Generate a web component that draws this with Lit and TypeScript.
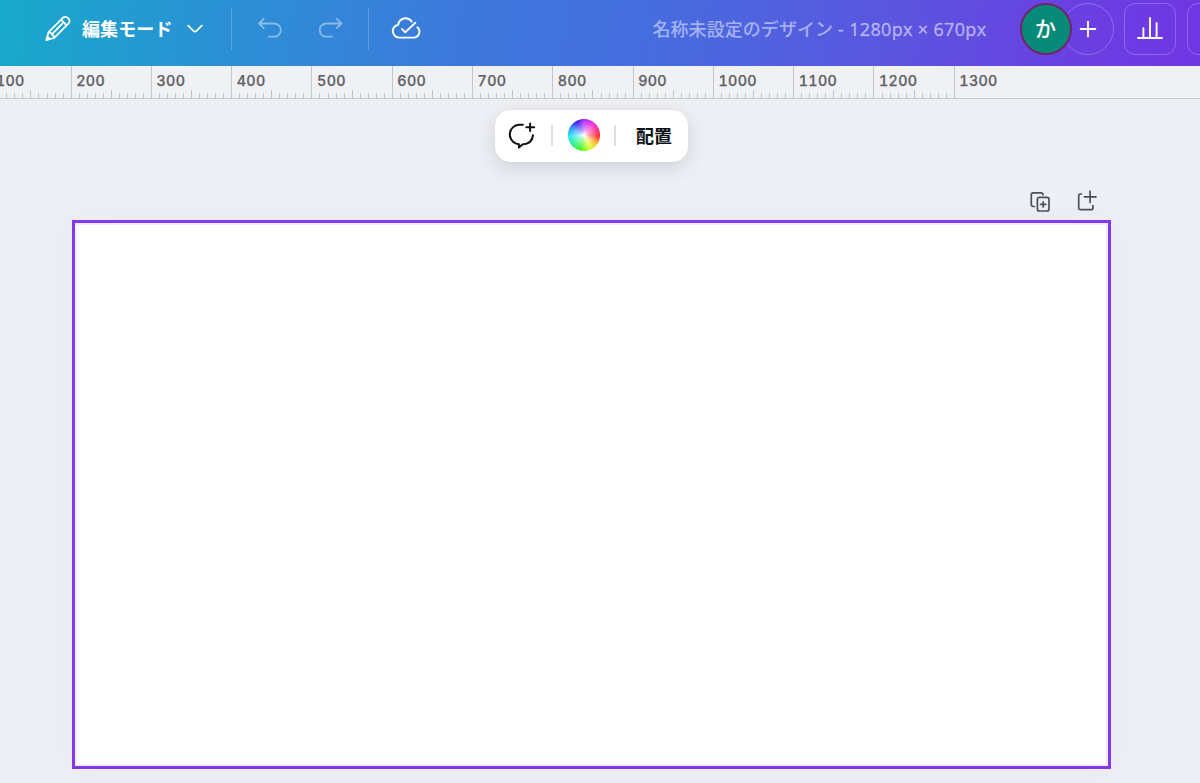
import { LitElement, html, css, svg } from "lit";
import { customElement } from "lit/decorators.js";

const STEP = 80.29;
const ORIGIN = -9.3;

@customElement("editor-header")
class EditorHeader extends LitElement {
  static styles = css`
    :host { display: block; }
    .bar { box-sizing: border-box; height: 66px; width: 1200px; overflow: hidden; display: flex; align-items: flex-start; padding-left: 44px;
      background: linear-gradient(97deg, #18aacb 0%, #2b90d5 19%, #3d78dc 39%, #466ddf 54%, #5a55df 74%, #6a40e2 89%, #7036e4 100%);
      color: #fff; font-family: "Open Sans", "Noto Sans", "Noto Sans CJK JP", sans-serif; }
    svg { display: block; flex: none; fill: none; stroke: currentColor; stroke-linecap: round; stroke-linejoin: round; }
    .row { display: flex; align-items: center; height: 57px; }
    .mode { font-size: 18px; font-weight: 700; line-height: 26px; margin-left: 10px; margin-bottom: 2px; width: 92px; letter-spacing: .1px; white-space: nowrap; font-family: "Noto Sans CJK JP", sans-serif; }
    .chev { margin-left: 12px; }
    .sep { width: 1px; height: 42px; background: rgba(255,255,255,.2); }
    .s1 { margin-left: 27px; }
    .s2 { margin-left: 24px; }
    .dim { opacity: .42; margin-bottom: 1px; }
    .undo { margin-left: 25px; }
    .redo { margin-left: 31px; }
    .cloud { margin-left: 22px; margin-bottom: 1px; }
    .title { margin-left: 231.5px; width: 336.5px; font-size: 18px; line-height: 26px; font-weight: 500; white-space: nowrap; color: rgba(255,255,255,.51); }
    .jp { font-family: "Noto Sans CJK JP", sans-serif; letter-spacing: .06px; }
    .size { letter-spacing: .33px; -webkit-text-stroke: .5px rgba(255,255,255,.35); }
    .people { display: flex; margin-left: 30.5px; }
    .avatar { box-sizing: border-box; width: 52px; height: 52px; border: 2px solid #72246b; border-radius: 50%; background: #078b78; display: flex; align-items: center; justify-content: center; font-size: 21px; line-height: 28px; padding-bottom: 3px; z-index: 1; font-family: "Noto Sans CJK JP", sans-serif; font-weight: 500; }
    .add { box-sizing: border-box; width: 52px; height: 52px; margin-left: -10px; border: 1px solid rgba(255,255,255,.23); border-radius: 50%; display: flex; align-items: center; justify-content: center; }
    .btn { box-sizing: border-box; width: 52px; height: 52px; flex: none; border: 1px solid rgba(255,255,255,.23); border-radius: 11px; display: flex; align-items: center; justify-content: center; margin-left: 10.5px; }
  `;
  render() {
    return html`<div class="bar"><div class="row">
      <svg width="28" height="28" viewBox="0 0 28 28" stroke-width="1.8"><path d="M2.5 25 4.6 17.1 19.1 2.6Q21.7 .9 24.2 3.2T24.6 8.4L10.2 22.8Z M4.6 17.1Q8.9 18 10.2 22.8 M17 4.7 22.6 10.4 M7.8 19.3 18.3 8.7"/><path d="M2.5 25 3.4 21.7 5.7 24Z" fill="currentColor"/></svg>
      <span class="mode">編集モード</span>
      <svg class="chev" width="18" height="12" viewBox="0 0 18 12" stroke-width="1.8"><path d="M2.2 2.6 7.7 8.1Q9 9.2 10.3 8.1L15.8 2.6"/></svg>
      <span class="sep s1"></span>
      <svg class="undo dim" width="28" height="26" viewBox="0 0 28 26" stroke-width="1.8"><path d="M6.7 3.8 2 8.5 6.7 13.2 M2.5 8.5H17.2A6.6 6.6 0 0 1 17.2 21.7H11.5"/></svg>
      <svg class="redo dim" width="28" height="26" viewBox="0 0 28 26" stroke-width="1.8"><path d="M20.8 3.8 25.5 8.5 20.8 13.2 M25 8.5H10.3A6.6 6.6 0 0 0 10.3 21.7H16"/></svg>
      <span class="sep s2"></span>
      <svg class="cloud" width="30" height="26" viewBox="0 0 30 26" stroke-width="1.9"><path d="M20.6 6.4A7.4 7.4 0 0 0 7.2 9.7 A6.5 6.5 0 0 0 8.4 22.6H22.3A5.9 5.9 0 0 0 26.4 12.3 M10.9 13.9 14.2 17.4 24.3 7.7"/></svg>
      <span class="title"><span class="jp">名称未設定のデザイン</span><span class="size"> - 1280px × 670px</span></span>
      <div class="people"><div class="avatar">か</div><div class="add"><svg width="18" height="18" viewBox="0 0 18 18" stroke-width="1.8"><path d="M9 1.6V16.4M1.6 9H16.4"/></svg></div></div>
      <div class="btn"><svg width="28" height="26" viewBox="0 0 28 26" stroke-width="1.9"><path d="M2 22H26 M7.4 21.7V12.2 M14 21.7V2 M20.6 21.7V7"/></svg></div>
      <div class="btn"></div>
    </div></div>`;
  }
}

@customElement("pixel-ruler")
class PixelRuler extends LitElement {
  static styles = css`
    :host { display: block; }
    .ruler { display: grid; grid-template: 32px / 1200px; width: 1200px; overflow: hidden; border-bottom: 1px solid #c6c7cb; background: #f0f1f5; }
    .ticks { grid-area: 1 / 1; display: block; }
    .labels { grid-area: 1 / 1; display: flex; margin-left: -9.3px; }
    .label { box-sizing: border-box; flex: 0 0 80.29px; padding: 5px 0 0 5.2px; font: 500 14.3px/19px Inter, sans-serif; font-variant-numeric: tabular-nums; letter-spacing: .35px; -webkit-text-stroke: .25px #606164; color: #606164; }
  `;
  render() {
    const ticks = [];
    for (let i = 0; i <= 120; i++) {
      const x = Math.floor(ORIGIN + (i * STEP) / 10 + 0.1);
      const top = i % 10 === 0 ? 0 : i % 5 === 0 ? 24 : 27;
      ticks.push(svg`<rect x=${x} y=${top} width="1" height=${32 - top} fill="#c4c5c9"/>`);
    }
    return html`<div class="ruler"><svg class="ticks" width="1200" height="32">${ticks}</svg>
      <div class="labels">${Array.from({ length: 13 }, (_, i) => html`<span class="label">${100 + i * 100}</span>`)}</div></div>`;
  }
}

@customElement("context-toolbar")
class ContextToolbar extends LitElement {
  static styles = css`
    :host { display: block; }
    .bar { box-sizing: border-box; width: 193px; height: 52px; padding: 0 0 1px 12px; display: flex; align-items: center; border-radius: 15px; background: #fff; box-shadow: 0 0 1px rgba(57,76,96,.18), 0 6px 18px rgba(57,76,96,.17); }
    svg { display: block; fill: none; stroke: #0e1318; stroke-width: 2; stroke-linecap: round; stroke-linejoin: round; }
    .sep { width: 2px; height: 21px; background: #dedfe2; margin-left: 14px; }
    .wheel { width: 32px; height: 32px; margin-left: 15px; border-radius: 50%; background: radial-gradient(circle, #fff 0%, rgba(255,255,255,.6) 20%, rgba(255,255,255,0) 70%), conic-gradient(#b020f8, #ff20d0 45deg, #ff2525 95deg, #ffb820 125deg, #dcff20 155deg, #35f51c 195deg, #18ef99 238deg, #20e8f5 265deg, #2088ff 300deg, #2d16f0 330deg, #b020f8); }
    .place { margin: 0 0 1px 20px; font: 700 18px/26px "Noto Sans CJK JP", sans-serif; color: #0e1318; }
  `;
  render() {
    return html`<div class="bar">
      <svg width="30" height="30" viewBox="0 0 30 30"><path d="M15.8 4.8H11.8A9.7 9.7 0 0 0 9.2 23.6L11.9 24.3V27.4L15.4 24.4Q25.2 24 26 15.2 M23.1 3.4V11.1M19.4 7.2H27.2"/></svg>
      <span class="sep"></span><span class="wheel"></span><span class="sep"></span><span class="place">配置</span>
    </div>`;
  }
}

@customElement("app-root")
class AppRoot extends LitElement {
  static styles = css`
    :host { display: block; width: 1200px; height: 783px; overflow: hidden; background: #eeeff4; }
    .stage { display: flex; flex-direction: column; padding: 10.5px 89px 0 72px; }
    .toolbar { align-self: flex-start; margin-left: 423px; }
    .actions { display: flex; justify-content: flex-end; gap: 23px; margin: 28.5px 11px 0 0; height: 24px; }
    .actions svg { display: block; fill: none; stroke: #4d5056; stroke-width: 1.7; stroke-linecap: round; stroke-linejoin: round; }
    .board { box-sizing: border-box; width: 1039px; height: 549px; margin-top: 6px; border: 3px solid #8338ec; background: #fff; box-shadow: inset 0 0 0 2px #f2edfc, 0 0 32px rgba(57,76,96,.035); }
  `;
  render() {
    return html`<editor-header></editor-header><pixel-ruler></pixel-ruler>
      <main class="stage">
        <context-toolbar class="toolbar"></context-toolbar>
        <div class="actions">
          <svg width="24" height="24" viewBox="0 0 24 24"><path d="M5.4 16.5H4.2A1.9 1.9 0 0 1 2.3 14.6V4.7A1.9 1.9 0 0 1 4.2 2.8H12.1A1.9 1.9 0 0 1 14 4.7"/><rect x="8.4" y="7.3" width="11.6" height="13.7" rx="2"/><path d="M14.2 11.8V17M11.6 14.4H16.8"/></svg>
          <svg width="24" height="24" viewBox="0 0 24 24"><path d="M5.4 4H4.4A1.7 1.7 0 0 0 2.7 5.7V18A1.7 1.7 0 0 0 4.4 19.7H15.2A1.7 1.7 0 0 0 16.9 18V15.5M14.1 1V12.5M8.4 6.8H20"/></svg>
        </div>
        <section class="board"></section>
      </main>`;
  }
}
